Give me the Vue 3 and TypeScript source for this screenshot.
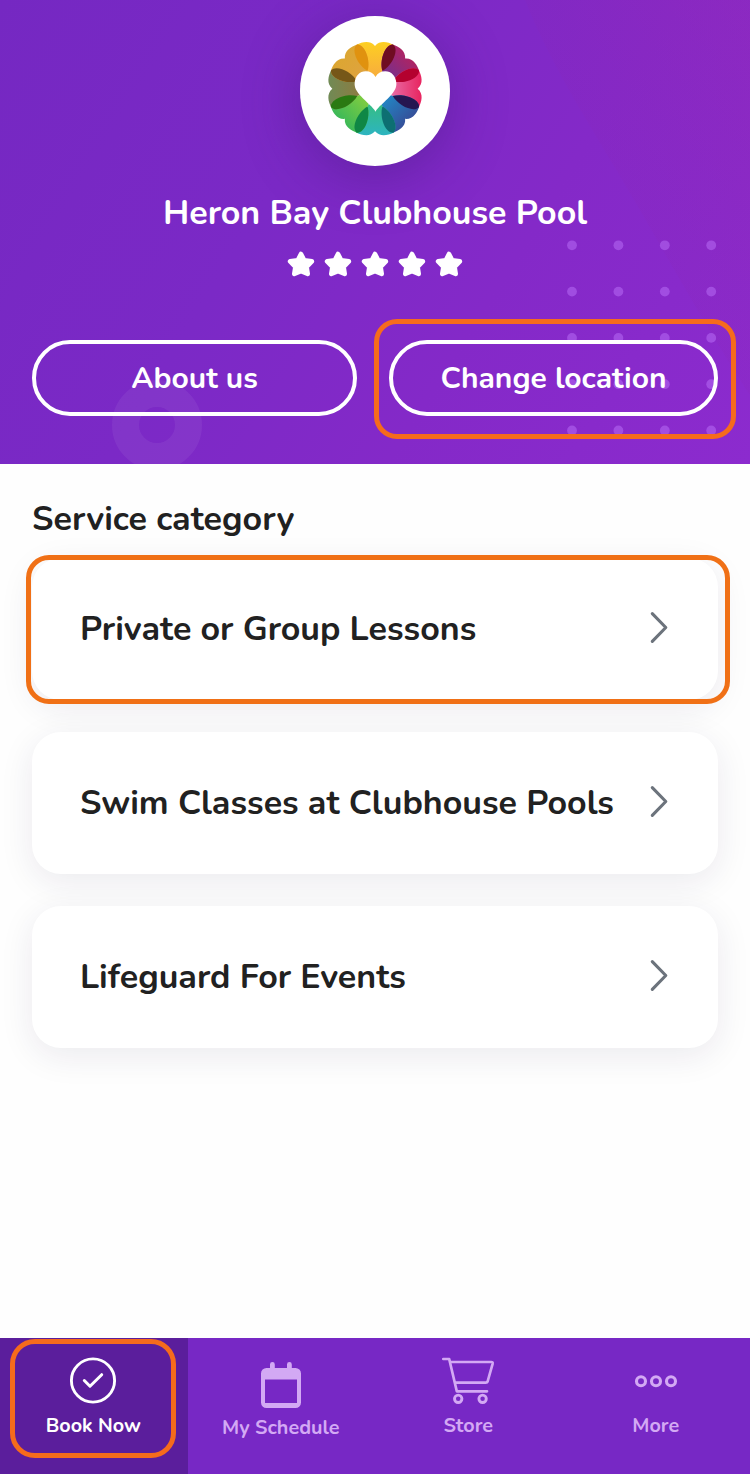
<script setup lang="ts">
interface Petal {
  angle: number
  fill: string
}

interface Category {
  name: string
  highlighted: boolean
}

const petals: Petal[] = [
  { angle: 0, fill: 'url(#yellow)' },
  { angle: 45, fill: 'url(#plum)' },
  { angle: 90, fill: 'url(#pink)' },
  { angle: 135, fill: 'url(#blue)' },
  { angle: 180, fill: 'url(#teal)' },
  { angle: 225, fill: 'url(#green)' },
  { angle: 270, fill: 'url(#olive)' },
  { angle: 315, fill: 'url(#gold)' },
]

const lenses: Petal[] = [
  { angle: 22.5, fill: '#6f0c22' },
  { angle: 67.5, fill: '#b4012f' },
  { angle: 112.5, fill: '#261650' },
  { angle: 157.5, fill: '#0d6f72' },
  { angle: 202.5, fill: '#0f8745' },
  { angle: 247.5, fill: '#2a7a12' },
  { angle: 292.5, fill: '#765718' },
  { angle: 337.5, fill: '#e0920f' },
]

const gradients = [
  { id: 'yellow', inner: '#f8b13a', outer: '#fdcf22' },
  { id: 'plum', inner: '#752f8e', outer: '#ae2463' },
  { id: 'pink', inner: '#e86aa4', outer: '#e8245f' },
  { id: 'blue', inner: '#2481c0', outer: '#35509a' },
  { id: 'teal', inner: '#35bd86', outer: '#2db4c0' },
  { id: 'green', inner: '#7acb42', outer: '#3cb958' },
  { id: 'olive', inner: '#8b7c42', outer: '#708a55' },
  { id: 'gold', inner: '#dfa33f', outer: '#dca632' },
]

const dotColumns = [572, 618.4, 664.8, 711.2]
const dotRows = [245.3, 291.6, 337.9, 384.2, 430.5]

const categories: Category[] = [
  { name: 'Private or Group Lessons', highlighted: true },
  { name: 'Swim Classes at Clubhouse Pools', highlighted: false },
  { name: 'Lifeguard For Events', highlighted: false },
]
</script>

<template>
  <div class="screen">
    <header class="hero">
      <svg class="backdrop" viewBox="0 0 750 464" aria-hidden="true">
        <defs>
          <linearGradient id="glow" gradientUnits="userSpaceOnUse" x1="560" y1="150" x2="750" y2="40">
            <stop offset="0" stop-color="#8a26b0" stop-opacity=".1" />
            <stop offset="1" stop-color="#9a28ae" stop-opacity=".28" />
          </linearGradient>
        </defs>
        <path d="M525 0C555 75 600 140 640 210C680 280 720 350 750 395V0Z" fill="url(#glow)" />
        <circle cx="157" cy="425" r="31.5" fill="none" stroke="#fff" stroke-width="27" opacity=".06" />
        <g fill="#b76bf5" opacity=".55">
          <template v-for="y in dotRows" :key="y">
            <circle v-for="x in dotColumns" :key="x" :cx="x" :cy="y" r="4.9" />
          </template>
        </g>
      </svg>

      <div class="logo">
        <svg width="150" height="150" viewBox="-225 -218 450 450">
          <defs>
            <linearGradient
              v-for="g in gradients"
              :id="g.id"
              :key="g.id"
              gradientUnits="userSpaceOnUse"
              x1="0"
              y1="-50"
              x2="0"
              y2="-140"
            >
              <stop offset="0" :stop-color="g.inner" />
              <stop offset="1" :stop-color="g.outer" />
            </linearGradient>
          </defs>
          <path
            v-for="p in petals"
            :key="p.angle"
            :transform="`rotate(${p.angle})`"
            :fill="p.fill"
            d="M0 0L-22.200 -53.600C-51.600 -69.600 -73 -117 -54.700 -132.100C-40 -139 -16 -147 0 -128C16 -147 40 -139 54.700 -132.100C73 -117 51.600 -69.600 22.200 -53.600Z"
          />
          <path
            v-for="l in lenses"
            :key="l.angle"
            :transform="`rotate(${l.angle})`"
            :fill="l.fill"
            d="M0 -58C21 -84 23 -136 0 -143C-23 -136 -21 -84 0 -58Z"
          />
          <path
            d="M1.500 69C-4 58 -26 40 -42 23C-57 6 -62 -4 -61 -18C-59 -38 -46 -52 -28 -52C-14 -52 -4 -46 1.500 -35C7 -46 17 -52 31 -52C49 -52 62 -38 64 -18C65 -4 60 6 45 23C29 40 7 58 1.500 69Z"
            fill="#fff"
          />
        </svg>
      </div>

      <h1 class="club">Heron Bay Clubhouse Pool</h1>

      <div class="stars">
        <svg v-for="n in 5" :key="n" width="27" height="26" viewBox="0 0 27 26">
          <path
            d="M13 3L16.200 9.300L23.900 10.400L18.600 15.800L19.700 22.900L13 20.200L6.300 22.900L7.400 15.800L2.100 10.400L9.800 9.300Z"
            fill="#fff"
            stroke="#fff"
            stroke-width="4.600"
            stroke-linejoin="round"
          />
        </svg>
      </div>

      <div class="actions">
        <button class="pill about" type="button">About us</button>
        <div class="marked">
          <button class="pill change" type="button">Change location</button>
          <i class="marker marker-change"></i>
        </div>
      </div>
    </header>

    <main class="content">
      <h2 class="heading">Service category</h2>
      <ul class="cards">
        <li v-for="c in categories" :key="c.name" class="card">
          <span class="name">{{ c.name }}</span>
          <svg class="chevron" width="20" height="34" viewBox="0 0 20 34">
            <path d="M3.300 3.600L16.800 17.500L3.300 31.400" />
          </svg>
          <i v-if="c.highlighted" class="marker marker-card"></i>
        </li>
      </ul>
    </main>

    <nav class="tabs">
      <a class="tab active">
        <svg width="48" height="48" viewBox="0 0 48 48" class="line">
          <circle cx="24" cy="24.500" r="21.600" stroke-width="2.900" />
          <path d="M15.300 24.500L21 30.200L32.700 18.700" stroke-width="3" />
        </svg>
        <span class="label">Book Now</span>
        <i class="marker marker-tab"></i>
      </a>
      <a class="tab schedule-tab">
        <svg width="42" height="48" viewBox="0 0 42 48">
          <path
            d="M10 3.500a2.400 2.400 0 0 1 4.800 0V7H27V3.500a2.400 2.400 0 0 1 4.800 0V7H35.500A5.500 5.500 0 0 1 41 12.500V41.500A5.500 5.500 0 0 1 35.500 47H6.500A5.500 5.500 0 0 1 1 41.500V12.500A5.500 5.500 0 0 1 6.500 7H10ZM5 18.500V42H37V18.500Z"
            fill="currentColor"
            fill-rule="evenodd"
          />
        </svg>
        <span class="label schedule">My Schedule</span>
      </a>
      <a class="tab">
        <svg width="54" height="48" viewBox="0 0 54 48" class="line">
          <path d="M2.300 3H8.200L15.800 35.300H46" stroke-width="2.700" />
          <path d="M9.300 6H50.200Q52 6 51.600 7.800L46.600 25.500Q46.200 26.700 44.700 26.700H14.500" stroke-width="2.700" />
          <circle cx="17.200" cy="42.800" r="3.700" stroke-width="2.900" />
          <circle cx="41.600" cy="42.800" r="3.700" stroke-width="2.900" />
        </svg>
        <span class="label">Store</span>
      </a>
      <a class="tab">
        <svg width="44" height="48" viewBox="0 0 44 48" class="line">
          <circle cx="7" cy="25.200" r="4.500" stroke-width="3.100" />
          <circle cx="22" cy="25.200" r="4.500" stroke-width="3.100" />
          <circle cx="37" cy="25.200" r="4.500" stroke-width="3.100" />
        </svg>
        <span class="label">More</span>
      </a>
    </nav>
  </div>
</template>

<style>
body {
  margin: 0;
  background: #fefefe;
}
</style>

<style scoped>
.screen {
  display: flex;
  flex-direction: column;
  width: 750px;
  height: 1474px;
  overflow: hidden;
  background: #fefefe;
  font-family: Nunito, Lato, "Open Sans", sans-serif;
  color: #212121;
}

.hero {
  position: relative;
  display: flex;
  flex-direction: column;
  align-items: center;
  box-sizing: border-box;
  height: 464px;
  padding: 16px 32px 0;
  background: linear-gradient(122deg, #7528c2 0%, #7b29c6 38%, #8429c8 65%, #8c2bce 100%);
}

.backdrop {
  position: absolute;
  inset: 0;
  width: 750px;
  height: 464px;
}

.logo {
  position: relative;
  width: 150px;
  height: 150px;
  border-radius: 50%;
  background: #fff;
  box-shadow: 0 10px 56px rgba(66, 24, 120, 0.45);
}

.logo svg {
  display: block;
}

.club {
  position: relative;
  height: 46px;
  margin: 24px 0 0;
  font-size: 34px;
  line-height: 46px;
  font-weight: 700;
  color: #fff;
  white-space: nowrap;
}

.stars {
  position: relative;
  display: flex;
  gap: 10px;
  height: 26px;
  margin-top: 15px;
}

.stars svg {
  overflow: visible;
}

.actions {
  position: relative;
  display: flex;
  gap: 32px;
  width: 686px;
  margin-top: 63px;
}

.marked {
  position: relative;
  flex: 0 0 329px;
}

.pill {
  box-sizing: border-box;
  height: 76px;
  padding: 1px 0 0;
  border: 4px solid #fff;
  border-radius: 38px;
  background: transparent;
  font: inherit;
  font-size: 30px;
  font-weight: 700;
  color: #fff;
  white-space: nowrap;
}

.about {
  flex: 0 0 325px;
}

.change {
  width: 329px;
}

.marker {
  position: absolute;
  box-sizing: border-box;
  border: 5.5px solid #f66b1c;
  pointer-events: none;
}

.marker-change {
  inset: -21px -18px -23px -15px;
  border-radius: 23px;
}

.marker-card {
  inset: -3px -12px -4px -6px;
  border-color: #f07016;
  border-radius: 23px;
}

.marker-tab {
  left: 10px;
  top: 1px;
  width: 166px;
  height: 119px;
  border-radius: 25px;
}

.content {
  flex: 1;
  padding: 32px 32px 0;
}

.heading {
  height: 46px;
  margin: 0 0 16px;
  font-size: 34px;
  line-height: 46px;
  font-weight: 700;
}

.cards {
  display: flex;
  flex-direction: column;
  gap: 32px;
  margin: 0;
  padding: 0;
  list-style: none;
}

.card {
  position: relative;
  display: flex;
  align-items: center;
  justify-content: space-between;
  box-sizing: border-box;
  height: 142px;
  padding: 0 49px 0 48px;
  border-radius: 29px;
  background: #fff;
  box-shadow: 0 8px 34px rgba(35, 25, 75, 0.085);
}

.name {
  font-size: 34px;
  line-height: 46px;
  font-weight: 700;
  white-space: nowrap;
}

.chevron {
  margin-bottom: 4px;
}

.chevron path {
  fill: none;
  stroke: #6c737c;
  stroke-width: 3.1;
  stroke-linecap: round;
  stroke-linejoin: round;
}

.tabs {
  display: grid;
  grid-template-columns: repeat(4, 1fr);
  flex: 0 0 136px;
  background: linear-gradient(to right, #5b1e9c 188px, #7728c5 188px);
}

.tab {
  position: relative;
  display: flex;
  flex-direction: column;
  align-items: center;
  padding: 18px 1px 0 0;
  color: #d3a9f4;
}

.active {
  color: #fff;
}

.schedule-tab {
  padding-top: 23px;
}

.line {
  fill: none;
  stroke: currentColor;
  stroke-linecap: round;
  stroke-linejoin: round;
}

.label {
  margin-top: 9px;
  font-size: 19.8px;
  line-height: 26px;
  font-weight: 700;
  white-space: nowrap;
}

.schedule {
  margin-top: 6px;
}
</style>
